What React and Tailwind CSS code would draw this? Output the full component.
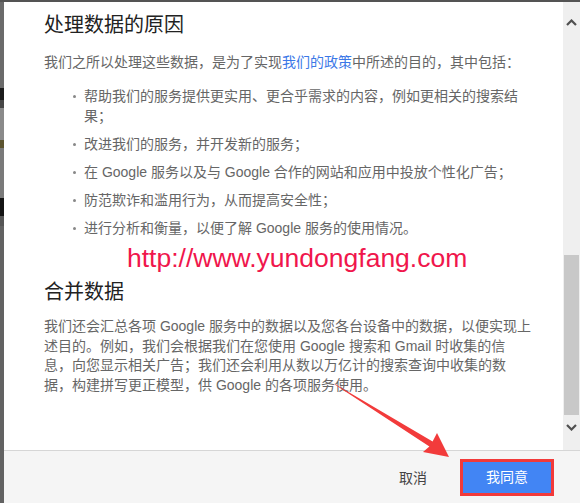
import React from 'react';

const bullets = [
  ['帮助我们的服务提供更实用、更合乎需求的内容，例如更相关的搜索结', '果；'],
  ['改进我们的服务，并开发新的服务；'],
  ['在 Google 服务以及与 Google 合作的网站和应用中投放个性化广告；'],
  ['防范欺诈和滥用行为，从而提高安全性；'],
  ['进行分析和衡量，以便了解 Google 服务的使用情况。'],
];

const mergeLines = [
  '我们还会汇总各项 Google 服务中的数据以及您各台设备中的数据，以便实现上',
  '述目的。例如，我们会根据我们在您使用 Google 搜索和 Gmail 时收集的信',
  '息，向您显示相关广告；我们还会利用从数以万亿计的搜索查询中收集的数',
  '据，构建拼写更正模型，供 Google 的各项服务使用。',
];

const Chevron = ({ up }) => (
  <svg width="11" height="7" viewBox="0 0 11 7">
    <polyline
      points={up ? '1,6 5.5,1.5 10,6' : '1,1 5.5,5.5 10,1'}
      fill="none"
      stroke="#505050"
      strokeWidth="2.2"
    />
  </svg>
);

// Fake scrollbar on the right of the dialog body
const Scrollbar = () => (
  <div className="w-[17px] shrink-0 bg-[#efefef] flex flex-col">
    <div className="h-[12px]" />
    <div className="h-[17px] flex items-center justify-center">
      <Chevron up />
    </div>
    <div className="h-[224px]" />
    <div className="h-[160px] mx-[1px] bg-[#c8c8c8]" />
    <div className="h-[4px]" />
    <div className="h-[17px] flex items-center justify-center">
      <Chevron />
    </div>
  </div>
);

export default function App() {
  return (
    <div className="relative w-[580px] h-[503px] overflow-hidden bg-[#5e5e5e] flex flex-col font-['Liberation_Sans','Noto_Sans_CJK_SC',sans-serif]">
      {/* page behind the dialog */}
      <div className="h-[2px] shrink-0 bg-[#545454]" />

      <div className="flex flex-1 min-h-0">
        <div className="w-[4px] shrink-0 flex flex-col">
          <div className="h-[86px] bg-[#6b6b6b]" />
          <div className="h-[12px] bg-[#1c1c1c]" />
          <div className="h-[8px] bg-[#464646]" />
          <div className="h-[32px] bg-[#8a8a8a]" />
          <div className="h-[8px] bg-[#5c5430]" />
          <div className="h-[50px] bg-[#7a7a7a]" />
          <div className="h-[18px] bg-[#141414]" />
          <div className="h-[10px] bg-[#565656]" />
          <div className="flex-1 bg-[#626262]" />
        </div>

        {/* Dialog */}
        <div className="flex-1 flex flex-col bg-white">
          <div className="flex h-[448px]">
            <div className="flex-1 overflow-hidden pl-[40px] pt-[9px]">
              <div className="w-[492px]">
                <h2 className="text-[20px] leading-[28px] text-[#222]">处理数据的原因</h2>
                <p className="mt-[13px] text-[14px] leading-[20px] text-[#666]">
                  我们之所以处理这些数据，是为了实现
                  <span className="text-[#3b78e7]">我们的政策</span>
                  中所述的目的，其中包括：
                </p>
                <ul className="mt-[14px] space-y-2">
                  {bullets.map((lines, i) => (
                    <li key={i} className="flex text-[14px] leading-[20px] text-[#666]">
                      <span className="w-[40px] shrink-0 flex justify-end pr-[8px] pt-[9px]">
                        <span className="w-[3px] h-[3px] rounded-full bg-[#888]" />
                      </span>
                      <span>
                        {lines.map((l, j) => (
                          <span key={j} className="block">{l}</span>
                        ))}
                      </span>
                    </li>
                  ))}
                </ul>

                <div className="mt-[5px] pl-[83px] text-[26.5px] leading-[30px] text-[#f0164c]">
                  http://www.yundongfang.com
                </div>

                <h2 className="mt-[5px] text-[20px] leading-[28px] text-[#222]">合并数据</h2>
                <p className="mt-[11px] text-[14px] leading-[19.7px] text-[#666]">
                  {mergeLines.map((l, i) => (
                    <span key={i} className="block">{l}</span>
                  ))}
                </p>
              </div>
            </div>
            <Scrollbar />
          </div>

          {/* Footer */}
          <div className="flex-1 border-t border-[#d6d6d6] bg-[#f5f5f5] flex items-center justify-end pr-[26px]">
            <button className="mr-[33px] mt-[3px] text-[14px] text-[#444]">取消</button>
            <div className="border-[3px] border-[#f23a3a]">
              <button className="w-[88px] h-[31px] bg-[#4285f4] text-white text-[14px]">我同意</button>
            </div>
          </div>
        </div>
      </div>

      {/* red annotation arrow */}
      <svg className="absolute inset-0 pointer-events-none" width="580" height="503" viewBox="0 0 580 503">
        <polygon
          points="334,383.5 432.6,441.5 437,433 449,457 423,452 429.4,446.5 335.5,385"
          fill="#f23b3b"
        />
      </svg>
    </div>
  );
}
